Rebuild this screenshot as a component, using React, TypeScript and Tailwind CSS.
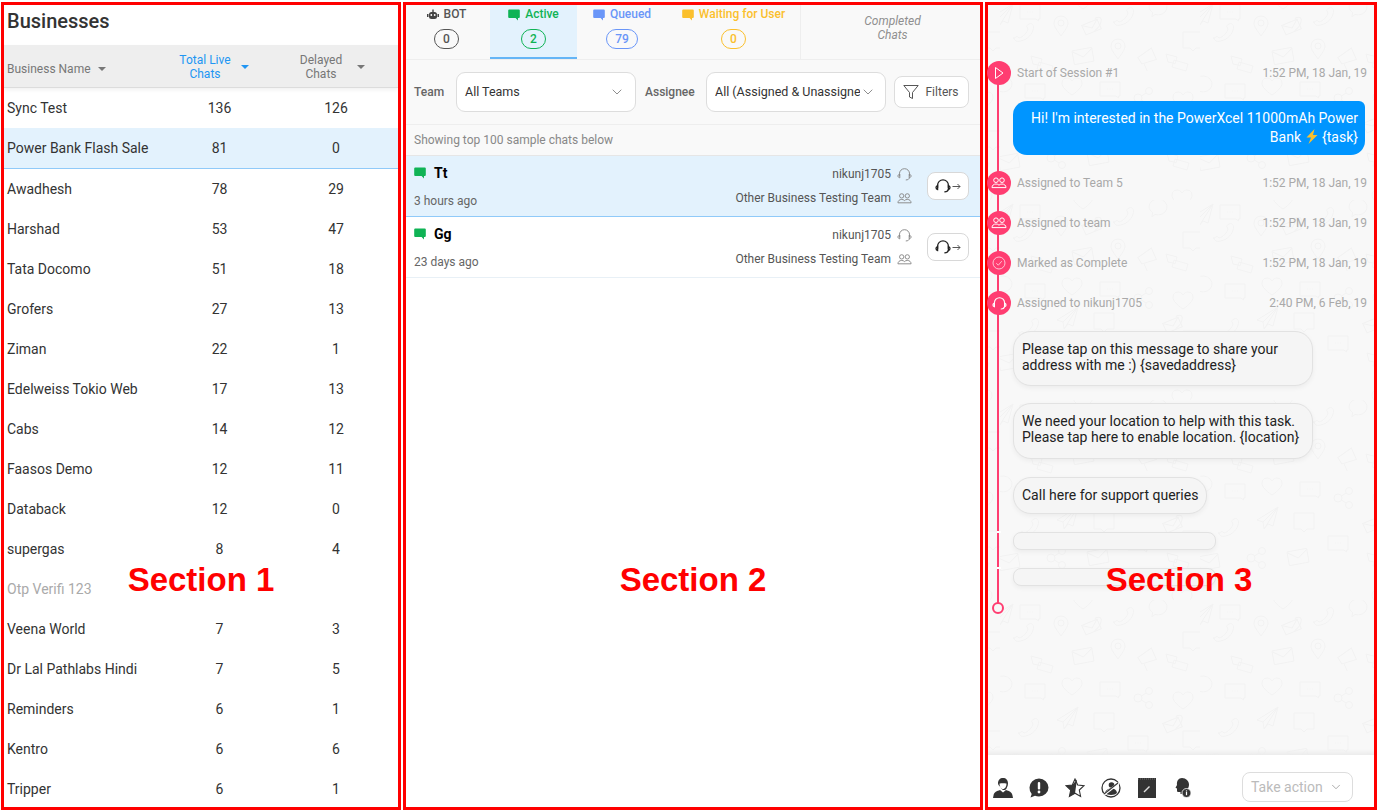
import React from "react";
import { ChevronDown } from "lucide-react";

const rows: [string, string, string][] = [
  ["Sync Test", "136", "126"],
  ["Power Bank Flash Sale", "81", "0"],
  ["Awadhesh", "78", "29"],
  ["Harshad", "53", "47"],
  ["Tata Docomo", "51", "18"],
  ["Grofers", "27", "13"],
  ["Ziman", "22", "1"],
  ["Edelweiss Tokio Web", "17", "13"],
  ["Cabs", "14", "12"],
  ["Faasos Demo", "12", "11"],
  ["Databack", "12", "0"],
  ["supergas", "8", "4"],
  ["Otp Verifi 123", "", ""],
  ["Veena World", "7", "3"],
  ["Dr Lal Pathlabs Hindi", "7", "5"],
  ["Reminders", "6", "1"],
  ["Kentro", "6", "6"],
  ["Tripper", "6", "1"],
];

function Caret({ className }: { className: string }) {
  return <span className={`inline-block w-0 h-0 border-x-[4px] border-x-transparent border-t-[4px] ${className}`} />;
}

function ChatGlyph({ color, size = 12 }: { color: string; size?: number }) {
  return (
    <svg width={size} height={size} viewBox="0 0 12 12">
      <path d="M1.2 0.5h9.6a1 1 0 0 1 1 1v6.6a1 1 0 0 1-1 1H10v2.4L7.6 9.1H1.2a1 1 0 0 1-1-1V1.5a1 1 0 0 1 1-1z" fill={color} />
    </svg>
  );
}

function Headset({ size = 14, color = "#777", width = 1 }: { size?: number; color?: string; width?: number }) {
  return (
    <svg width={size} height={size} viewBox="0 0 16 16" fill="none" stroke={color} strokeWidth={width} strokeLinecap="round">
      <path d="M2.6 9.5V7.2a5.4 5.4 0 0 1 10.8 0v2.3" />
      <path d="M2.6 7.6C1.5 8 1 8.8 1 9.6s.6 1.7 1.6 1.9z" />
      <path d="M13.4 7.6c1 .4 1.6 1.2 1.6 2s-.6 1.7-1.6 1.9z" />
      <path d="M13.2 11.6c-.3 1.4-1.5 2.2-3.4 2.2" />
    </svg>
  );
}

function Users({ size = 14, color = "#777" }: { size?: number; color?: string }) {
  return (
    <svg width={size} height={size} viewBox="0 0 16 16" fill="none" stroke={color} strokeWidth="1">
      <circle cx="5" cy="5.2" r="2.3" />
      <circle cx="11" cy="5.2" r="2.3" />
      <path d="M1 12.6c0-2.2 1.7-3.6 4-3.6 1.3 0 2.3.4 3 1.2.7-.8 1.7-1.2 3-1.2 2.3 0 4 1.4 4 3.6z" />
    </svg>
  );
}

function Tab({ w, label, count, color, icon, active }: { w: string; label: string; count: string; color: string; icon: React.ReactNode; active?: boolean }) {
  return (
    <div className={`${w} h-full flex flex-col items-center pt-[2px] ${active ? "bg-[#e3f2fd] border-b-2 border-[#64b5f6]" : ""}`}>
      <div className="flex items-center gap-[5px] h-[15px] text-[12px] font-medium leading-[15px]" style={{ color }}>
        {icon}
        <span>{label}</span>
      </div>
      <div className="mt-[7px] h-[20px] min-w-[25px] px-[8px] border rounded-[10px] flex items-center justify-center text-[12px] font-medium" style={{ color, borderColor: color }}>
        {count}
      </div>
    </div>
  );
}

function ChatRow({ name, time, selected }: { name: string; time: string; selected?: boolean }) {
  return (
    <div className={`h-[61px] flex pl-[8px] pr-[11px] border-b ${selected ? "bg-[#e3f2fd] border-[#90caf9]" : "bg-white border-[#e8f0f6]"}`}>
      <div className="w-[300px] flex flex-col">
        <div className="flex items-center gap-[8px] mt-[7px] h-[20px]">
          <ChatGlyph color="#0fb355" />
          <span className="text-[14px] font-bold text-black">{name}</span>
        </div>
        <div className="mt-[9px] text-[12px] leading-[18px] text-[#666]">{time}</div>
      </div>
      <div className="flex-1 flex flex-col items-end">
        <div className="flex items-center gap-[6px] mt-[10px] h-[16px] text-[12px] text-[#555]">
          <span>nikunj1705</span>
          <Headset size={15} color="#888" />
        </div>
        <div className="flex items-center gap-[6px] mt-[8px] h-[16px] text-[12px] text-[#555]">
          <span>Other Business Testing Team</span>
          <Users size={15} color="#888" />
        </div>
      </div>
      <div className="ml-[15px] mt-[16px] w-[42px] h-[28px] bg-white border border-[#d8d8d8] rounded-[8px] flex items-center justify-center gap-[1px]">
        <Headset size={16} color="#222" width={1.3} />
        <svg width="9" height="9" viewBox="0 0 9 9" fill="none" stroke="#444" strokeWidth="0.9"><path d="M0.5 4.5h7.5M5.5 2l2.5 2.5L5.5 7" /></svg>
      </div>
    </div>
  );
}

function EventDot({ children }: { children: React.ReactNode }) {
  return (
    <div className="w-[24px] h-[24px] -ml-[1px] rounded-full bg-[#ff3d71] flex items-center justify-center shrink-0">{children}</div>
  );
}

function EventRow({ icon, text, time, className }: { icon: React.ReactNode; text: string; time: string; className: string }) {
  return (
    <div className={`relative h-[24px] flex items-center pr-[7px] ${className}`}>
      <EventDot>{icon}</EventDot>
      <span className="ml-[6px] flex-1 text-[12px] text-[#a9a9a9]">{text}</span>
      <span className="text-[12px] text-[#a9a9a9]">{time}</span>
    </div>
  );
}

function Bubble({ children, className }: { children?: React.ReactNode; className: string }) {
  return (
    <div className={`relative ml-[25px] bg-[#f5f5f5] border border-[#e2e2e2] shadow-[0_2px_5px_rgba(0,0,0,0.05)] text-[14px] text-[#222] ${className}`}>{children}</div>
  );
}

/* faint wallpaper pieces, each drawn around 0,0 */
const Mail = () => <g><rect x="-10" y="-7" width="20" height="14" rx="1" /><path d="M-10 -6l10 7 10-7" /></g>;
const Heart = () => <path d="M0 9C-6 5-10 1-10-3c0-3 2-5 5-5 2 0 4 1 5 3 1-2 3-3 5-3 3 0 5 2 5 5 0 4-4 8-10 12z" />;
const Dots = () => <g><path d="M-10-7H10V7H8.500V9L6 7H-10z" /><path d="M-3 0h.6M-.3 0h.6M2.400 0H3" /></g>;
const Square = () => <path d="M-10-9H10V7H3L0 10-3 7H-10z" />;
const Pin = () => <g><path d="M0 10C-4 4-7 1-7-3a7 7 0 0 1 14 0c0 4-3 7-7 13z" /><circle cy="-3" r="3" /></g>;
const Phone = () => <path d="M-10 6c1-2 3-3 4-2l1 1C-1 4 3 0 4-4L3-6c-1-1 0-2 2-3 2-1 3 0 4 1 2 4-2 11-7 14-4 2-8 3-10 2-1-1-3-2-2-4z" />;
const Plane = () => <path d="M11-11L-10 2l6 2 1 7 4-5 5 2zM-4 4L11-11-3 11" />;
const Share = () => <g><circle cx="-6" r="4" /><circle cx="5" cy="-7" r="3.500" /><circle cx="5" cy="7" r="3.500" /><path d="M-2.500-2L2-5M-2.500 2L2 5" /></g>;
const Speech = () => <path d="M-9 0a9 8 0 1 1 6 7.500L-6 10-5.500 5.500C-7.500 4-9 2-9 0z" />;
const Mega = () => <g><path d="M-9-2L6-9 9 3-6 5z" /><path d="M-4 5l2 8" /></g>;
const Stack = () => <g><path d="M-11-7L0-4-2 3-4 2-9 1z" /><path d="M-3-1L11 3 9 10-5 6z" /></g>;
const DblMail = () => <g><path d="M-10-3L6-7 9 3-7 7z" /><path d="M-10-3L0 1 6-7" /><path d="M4-8c4-2 7 0 6 3-1 4-4 7-8 9" /></g>;

const tile: [React.FC, number, number, number][] = [
  [Dots, 30, 12, 0], [Pin, 61, 26, 0], [DblMail, 92, 27, -8], [Phone, 124, 17, 0], [Speech, 158, 7, 0],
  [Plane, 2, 15, 0], [Phone, 24, 33, 0], [Square, 193, 41, 0], [Mail, 83, 56, -10], [Pin, 118, 49, 0],
  [Mega, 147, 58, -10], [Stack, 42, 63, 0], [Stack, 177, 61, 0], [Heart, 72, 86, 0], [Dots, 35, 91, 0],
  [Dots, 110, 89, 0], [Share, 144, 98, 0], [Speech, 3, 84, 0], [Heart, 183, 100, 0], [Plane, 67, 118, 0],
  [Square, 104, 122, 0], [Phone, 29, 128, 0], [DblMail, 173, 125, -8], [Dots, 138, 143, 0], [Square, 193, 140, 0],
  [Mail, 98, 157, -10], [Share, 57, 158, 0], [Stack, 178, 160, 0], [Mail, 9, 162, -10], [Heart, 83, 0, 0], [Heart, 182, 198, 0],
];

function Wallpaper() {
  return (
    <svg className="absolute inset-0 w-full h-full" aria-hidden="true">
      <defs>
        <pattern id="wp" width="200" height="200" patternUnits="userSpaceOnUse" x="12" y="195">
          <g fill="none" stroke="#f2f2f2" strokeWidth="1">
            {tile.map(([I, x, y, r], i) => (
              <g key={i} transform={`translate(${x} ${y}) rotate(${r})`}><I /></g>
            ))}
          </g>
        </pattern>
      </defs>
      <rect width="100%" height="100%" fill="url(#wp)" />
    </svg>
  );
}

function Label({ n, className = "" }: { n: number; className?: string }) {
  return (
    <div className={`absolute left-0 right-0 top-[556px] text-center text-[33px] leading-[38px] font-bold text-[#ff0000] pointer-events-none [font-family:'Liberation_Sans',Arial,sans-serif] ${className}`}>
      Section {n}
    </div>
  );
}

export default function App() {
  return (
    <div className="w-[1378px] h-[812px] bg-white overflow-hidden pt-[2px] flex [font-family:Roboto,'Liberation_Sans',sans-serif]">
      {/* Section 1 */}
      <section className="relative ml-[1px] w-[400px] h-[808px] border-[3px] border-[#ff0000] overflow-hidden shrink-0">
        <h1 className="h-[40px] pl-[3px] pb-[8px] flex items-center text-[20px] font-medium text-[#333]">Businesses</h1>
        <div className="h-[43px] pt-[2px] bg-[#eeeeee] border-b border-[#dcdcdc] flex items-center text-[12px] leading-[14px] text-[#777] shadow-[0_2px_4px_rgba(0,0,0,0.06)] relative">
          <div className="w-[157px] pl-[3px] pt-[4px] flex items-center gap-[7px]"><span>Business Name</span><Caret className="border-t-[#777]" /></div>
          <div className="w-[117px] flex items-center text-[#2196f3]">
            <span className="w-[88px] text-center">Total Live<br />Chats</span>
            <Caret className="border-t-[#2196f3] ml-[-8px]" />
          </div>
          <div className="w-[116px] flex items-center">
            <span className="w-[86px] text-center">Delayed<br />Chats</span>
            <Caret className="ml-[-7px] border-t-[#777]" />
          </div>
        </div>
        {rows.map(([name, a, b], i) => (
          <div key={name} className={`flex items-center text-[14px] text-[#333] ${i === 1 ? "h-[41px] bg-[#e3f2fd] border-b border-[#90caf9]" : "h-[40px]"}`}>
            <div className={`w-[157px] pl-[3px] ${name.startsWith("Otp") ? "text-[#aaaaaa]" : ""}`}>{name}</div>
            <div className="w-[117px] text-center">{a}</div>
            <div className="w-[116px] text-center">{b}</div>
          </div>
        ))}
        <Label n={1} />
      </section>

      {/* Section 2 */}
      <section className="relative ml-[2px] w-[580px] h-[808px] border-[3px] border-[#ff0000] overflow-hidden shrink-0 bg-white">
        <div className="h-[55px] bg-[#f9f9f9] border-b border-[#eeeeee] flex">
          <Tab w="w-[84px] pr-[3px]" label="BOT" count="0" color="#555555" icon={
            <svg width="12" height="11" viewBox="0 0 12 11" fill="#444"><rect x="2" y="3" width="8" height="7" rx="2.500" /><rect x="0" y="5" width="1.500" height="3" /><rect x="10.500" y="5" width="1.500" height="3" /><rect x="5.300" y="0.500" width="1.400" height="3" /><circle cx="4.300" cy="6" r="0.900" fill="#fff" /><circle cx="7.700" cy="6" r="0.900" fill="#fff" /></svg>
          } />
          <Tab w="w-[87px]" label="Active" count="2" color="#0fb355" active icon={<ChatGlyph color="#0fb355" />} />
          <Tab w="w-[90px]" label="Queued" count="79" color="#6a96f8" icon={<ChatGlyph color="#6a96f8" />} />
          <Tab w="w-[133px]" label="Waiting for User" count="0" color="#fbc02d" icon={<ChatGlyph color="#fbc02d" />} />
          <div className="flex-1 border-l border-[#eeeeee] flex items-center justify-center text-center text-[12px] leading-[14px] italic text-[#8f8f8f] pb-[8px] pl-[4px]">
            Completed<br />Chats
          </div>
        </div>
        <div className="h-[65px] bg-[#f9f9f9] border-b border-[#eeeeee] flex items-center pl-[8px] text-[12px] font-medium text-[#666]">
          <span className="w-[42px]">Team</span>
          <div className="w-[180px] h-[40px] bg-white border border-[#dddddd] rounded-[9px] flex items-center pl-[8px] pr-[10px] text-[12.500px] font-normal text-[#333]">
            <span className="flex-1">All Teams</span>
            <ChevronDown size={16} strokeWidth={1} color="#555" />
          </div>
          <span className="ml-[9px] w-[61px]">Assignee</span>
          <div className="w-[180px] h-[40px] bg-white border border-[#dddddd] rounded-[9px] flex items-center pl-[8px] pr-[6px] text-[12.500px] font-normal text-[#333]">
            <span className="w-[145px] overflow-hidden whitespace-nowrap">All (Assigned &amp; Unassigned)</span>
            <ChevronDown size={16} strokeWidth={1} color="#555" />
          </div>
          <div className="ml-[8px] w-[75px] h-[32px] bg-white border border-[#dddddd] rounded-[8px] flex items-center justify-center gap-[6px] text-[12px] font-normal text-[#555]">
            <svg className="-ml-[1px]" width="16" height="16" viewBox="0 0 16 16" fill="none" stroke="#444" strokeWidth="0.9"><path d="M0.800 1.500h14.400L9.500 8.500v6L6.500 13V8.500z" /></svg>
            <span>Filters</span>
          </div>
        </div>
        <div className="h-[31px] bg-[#f9f9f9] border-b border-[#e6e6e6] pl-[8px] flex items-center text-[12px] text-[#888]">Showing top 100 sample chats below</div>
        <ChatRow name="Tt" time="3 hours ago" selected />
        <ChatRow name="Gg" time="23 days ago" />
        <Label n={2} />
      </section>

      {/* Section 3 */}
      <section className="relative ml-[2px] w-[392px] h-[808px] border-[3px] border-[#ff0000] shrink-0 flex flex-col bg-white">
        <div className="relative h-[750px] bg-[#f8f8f8] shrink-0">
          <Wallpaper />
          <div className="relative pt-[56px]">
            <div className="absolute left-[9px] top-[68px] w-[2px] h-[535px] bg-[#ff3d71]" />
            <EventRow className="" text="Start of Session #1" time="1:52 PM, 18 Jan, 19" icon={
              <svg width="14" height="14" viewBox="0 0 14 14" fill="none" stroke="#fff" strokeWidth="1"><path d="M3.500 1.500L11 7l-7.500 5.500z" /></svg>
            } />
            <div className="relative ml-[25px] mr-[9px] mt-[16px] h-[54px] bg-[#0095ff] rounded-[14px] rounded-tr-[6px] pt-[8px] pr-[7px] text-right text-[14px] leading-[19px] text-white">
              Hi! I'm interested in the PowerXcel 11000mAh Power<br />Bank{" "}
              <svg className="inline-block align-[-2px]" width="14" height="15" viewBox="0 0 14 15"><path d="M9.500 0L1.500 8.500h4.500L3.500 15l9-9H8z" fill="#fbc02d" /></svg>{" "}
              {"{task}"}
            </div>
            <EventRow className="mt-[16px]" text="Assigned to Team 5" time="1:52 PM, 18 Jan, 19" icon={<Users size={16} color="#fff" />} />
            <EventRow className="mt-[16px]" text="Assigned to team" time="1:52 PM, 18 Jan, 19" icon={<Users size={16} color="#fff" />} />
            <EventRow className="mt-[16px]" text="Marked as Complete" time="1:52 PM, 18 Jan, 19" icon={
              <svg width="14" height="14" viewBox="0 0 14 14" fill="none" stroke="#ffd0dc" strokeWidth="0.900"><circle cx="7" cy="7" r="6" /><path d="M4.300 7.200l2 2 3.500-4" /></svg>
            } />
            <EventRow className="mt-[16px]" text="Assigned to nikunj1705" time="2:40 PM, 6 Feb, 19" icon={<Headset size={15} color="#fff" width={1.2} />} />
            <Bubble className="mt-[16px] w-[300px] h-[55px] rounded-[18px] pl-[8px] pt-[9px] leading-[16px]">
              Please tap on this message to share your<br />address with me :) {"{savedaddress}"}
            </Bubble>
            <Bubble className="mt-[17px] w-[300px] h-[56px] rounded-[18px] pl-[8px] pt-[9px] leading-[16px]">
              We need your location to help with this task.<br />Please tap here to enable location. {"{location}"}
            </Bubble>
            <Bubble className="mt-[18px] w-[194px] h-[37px] rounded-[18px] pl-[8px] pt-[9px] leading-[16px]">Call here for support queries</Bubble>
            <Bubble className="mt-[18px] w-[203px] h-[18px] rounded-[8px]">
              <span className="absolute left-[-17px] top-[-2px] w-[4px] h-[2px] bg-white" />
            </Bubble>
            <Bubble className="mt-[18px] w-[203px] h-[18px] rounded-[8px]">
              <span className="absolute left-[-17px] top-[-2px] w-[4px] h-[2px] bg-white" />
            </Bubble>
            <div className="relative ml-[4px] mt-[16px] w-[12px] h-[12px] rounded-full border-2 border-[#ff3d71] bg-[#f8f8f8]" />
          </div>
          <div className="absolute left-0 right-0 bottom-0 h-[6px] bg-gradient-to-b from-transparent to-[#ececec]" />
        </div>
        <div className="flex-1 bg-white flex items-end pl-[5px] pb-[5px]">
          <div className="flex items-center gap-[16px] h-[28px]">
            {/* agent */}
            <svg width="20" height="22" viewBox="0 0 20 22"><path d="M10 1c3 0 5 2 5 5.500 0 1.500-.4 3-1.200 4.300-.3 1-.8 1.700-1.800 2.200h-2c-1 -.5-1.500-1.200-1.800-2.200C7.400 9.500 5 8.500 5 6.500 5 3 7 1 10 1z" fill="#333" /><path d="M6.500 6.500c1.500-.5 5.500-.5 7 0 0 3-1.500 5.500-3.500 5.500s-3.500-2.500-3.500-5.500z" fill="#fff" /><path d="M7 13c-3 1-6 2-6.500 5.500L0 21h20l-.5-2.500C19 15 16 14 13 13l-3 2.500z" fill="#333" /></svg>
            {/* alert bubble */}
            <svg width="20" height="20" viewBox="0 0 20 20"><path d="M10 0.500a9.500 9 0 0 1 0 18c-1.500 0-2.800-.3-4-.8L1.500 19.500l1.200-3.600A9 9 0 0 1 .5 9.500 9.500 9 0 0 1 10 .5z" fill="#333" /><rect x="8.800" y="4" width="2.400" height="7.500" rx="1" fill="#fff" /><circle cx="10" cy="14" r="1.400" fill="#fff" /></svg>
            {/* half star */}
            <svg width="20" height="20" viewBox="0 0 20 20"><path d="M10 1l2.700 6 6.300.7-4.700 4.300 1.300 6.500L10 15.200 4.400 18.500 5.700 12 1 7.700 7.300 7z" fill="#fff" stroke="#333" strokeWidth="1.100" /><path d="M12 1.500L10 15.200 4.400 18.500 5.700 12 1 7.700 7.300 7z" fill="#333" /></svg>
            {/* crossed person */}
            <svg width="20" height="20" viewBox="0 0 20 20" fill="none"><circle cx="10" cy="10" r="9" stroke="#333" strokeWidth="1.300" /><circle cx="10.500" cy="7" r="2.800" fill="#333" /><path d="M4 15c.5-3 3-4.500 6.500-4.500S15.500 12 16 15c-2 2.500-10 2.500-12 0z" fill="#333" /><path d="M3 16.500L18 5" stroke="#fff" strokeWidth="2.400" /><path d="M3 16L17 5" stroke="#333" strokeWidth="1.100" /></svg>
            {/* notepad */}
            <svg width="20" height="20" viewBox="0 0 20 20"><rect x="1" y="0" width="18" height="20" fill="#333" /><path d="M1 1h18" stroke="#888" strokeWidth="0.700" strokeDasharray="1 1" /><path d="M7 14l5.500-5.500" stroke="#ddd" strokeWidth="1.500" /></svg>
            {/* head + info */}
            <svg width="20" height="22" viewBox="0 0 20 22"><path d="M9 1c4 0 7 3 7 6.500 0 2.200-.8 3.500-1.500 4.800V17H7.500v-2H5c-.8 0-1-.6-1-1.200V11.500L2.500 10.800 4 8C3.500 4 5.500 1 9 1z" fill="#333" /><circle cx="13.500" cy="16" r="4.500" fill="#333" stroke="#fff" strokeWidth="0.800" /><rect x="12.900" y="15" width="1.200" height="3.200" fill="#fff" /><rect x="12.900" y="13.400" width="1.200" height="1.100" fill="#fff" /></svg>
          </div>
          <div className="ml-[49px] w-[111px] h-[30px] border border-[#dddddd] rounded-[8px] flex items-center pl-[8px] gap-[6px] text-[14px] text-[#bbbbbb]">
            <span>Take action</span>
            <ChevronDown size={14} strokeWidth={1.2} color="#888" />
          </div>
        </div>
        <Label n={3} className="pr-[4px]" />
      </section>
    </div>
  );
}
